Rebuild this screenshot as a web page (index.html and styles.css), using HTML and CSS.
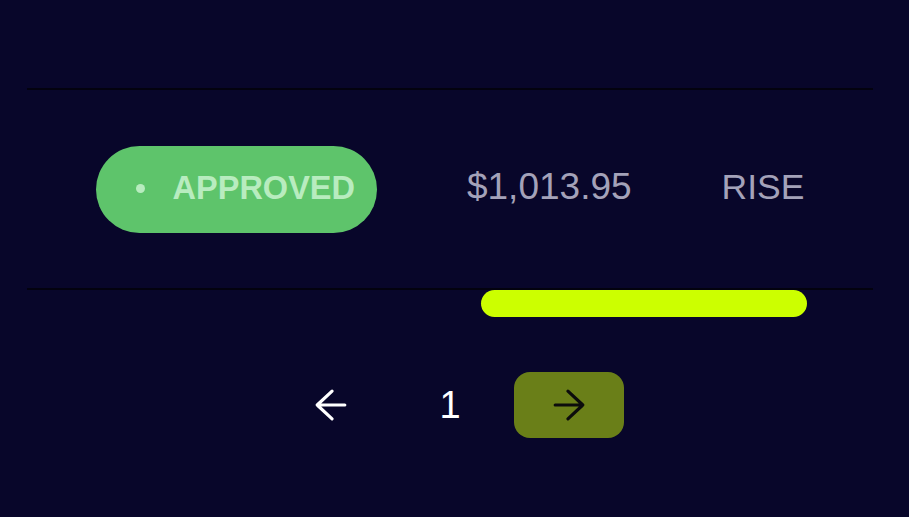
FILE: index.html
```html
<!DOCTYPE html>
<html lang="en">
<head>
  <meta charset="UTF-8">
  <meta name="viewport" content="width=device-width, initial-scale=1.0">
  <title>Payouts</title>
  <link rel="stylesheet" href="styles.css">
</head>
<body>
  <div class="table">
    <!-- previous row, scrolled out of view -->
    <div class="row-top"></div>

    <div class="row">
      <span class="status">
        <span class="dot"></span>
        APPROVED
      </span>
      <span class="amount">$1,013.95</span>
      <span class="method">RISE</span>
    </div>

    <!-- horizontal scroll thumb -->
    <div class="scroll-track">
      <div class="scroll-thumb"></div>
    </div>

    <div class="pager">
      <button class="page-btn" type="button" aria-label="Previous page">
        <svg width="34" height="34" viewBox="0 0 32 32" fill="none" stroke="#fff" stroke-width="3" stroke-linecap="round" stroke-linejoin="round">
          <path d="M3 16H29M17 3L3 16L17 29"/>
        </svg>
      </button>
      <span class="page-num">1</span>
      <button class="page-btn next" type="button" aria-label="Next page">
        <svg width="34" height="34" viewBox="0 0 32 32" fill="none" stroke="#0c0c0c" stroke-width="3" stroke-linecap="round" stroke-linejoin="round">
          <path d="M3 16H29M15 3L29 16L15 29"/>
        </svg>
      </button>
    </div>
  </div>
</body>
</html>
```

FILE: styles.css
```css
body {
  margin: 0;
  padding: 0;
  background-color: #08062a;
  font-family: "Liberation Sans", Arial, sans-serif;
  color: #f0f0f0;
}

.table {
  margin: 0 36px 0 27px;
}

.row-top {
  height: 88px;
  border-bottom: 2px solid #03020f;
}

.row {
  height: 198px;
  display: flex;
  align-items: center;
  justify-content: center;
  gap: 90px;
  border-bottom: 2px solid #03020f;
}

.status {
  display: flex;
  align-items: center;
  gap: 28px;
  height: 87px;
  box-sizing: border-box;
  padding: 0 22px 2px 40px;
  border-radius: 44px;
  background-color: #5ec46b;
  color: #b8ecbf;
  font-size: 32.5px;
  font-weight: 700;
}

.dot {
  width: 9px;
  height: 9px;
  border-radius: 50%;
  background-color: #b8ecbf;
}

.amount, .method {
  font-size: 37px;
  color: #a4a2b9;
  padding-bottom: 4px;
}

.method {
  font-size: 35.5px;
}

.scroll-track {
  height: 27px;
}

.scroll-thumb {
  margin-left: 454px;
  width: 326px;
  height: 27px;
  border-radius: 14px;
  background-color: #ccff00;
}

.pager {
  display: flex;
  align-items: center;
  justify-content: center;
  gap: 53px;
  margin-top: 55px;
}

.page-btn {
  width: 110px;
  height: 66px;
  border: none;
  border-radius: 16px;
  background: transparent;
  display: flex;
  align-items: center;
  justify-content: center;
  padding: 0;
  cursor: pointer;
}

.page-btn.next {
  background-color: #6a7f18;
}

.page-num {
  font-size: 38px;
  color: #fff;
}
```
